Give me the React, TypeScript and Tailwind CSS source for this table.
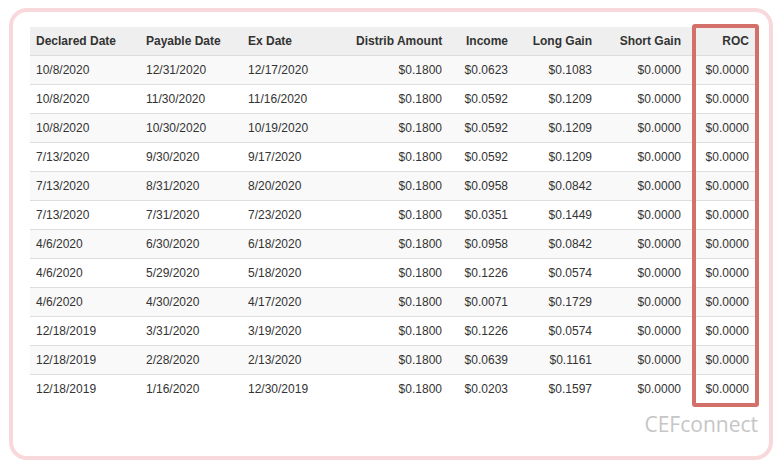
const rows: string[][] = [
  ['10/8/2020', '12/31/2020', '12/17/2020', '$0.1800', '$0.0623', '$0.1083', '$0.0000', '$0.0000'],
  ['10/8/2020', '11/30/2020', '11/16/2020', '$0.1800', '$0.0592', '$0.1209', '$0.0000', '$0.0000'],
  ['10/8/2020', '10/30/2020', '10/19/2020', '$0.1800', '$0.0592', '$0.1209', '$0.0000', '$0.0000'],
  ['7/13/2020', '9/30/2020', '9/17/2020', '$0.1800', '$0.0592', '$0.1209', '$0.0000', '$0.0000'],
  ['7/13/2020', '8/31/2020', '8/20/2020', '$0.1800', '$0.0958', '$0.0842', '$0.0000', '$0.0000'],
  ['7/13/2020', '7/31/2020', '7/23/2020', '$0.1800', '$0.0351', '$0.1449', '$0.0000', '$0.0000'],
  ['4/6/2020', '6/30/2020', '6/18/2020', '$0.1800', '$0.0958', '$0.0842', '$0.0000', '$0.0000'],
  ['4/6/2020', '5/29/2020', '5/18/2020', '$0.1800', '$0.1226', '$0.0574', '$0.0000', '$0.0000'],
  ['4/6/2020', '4/30/2020', '4/17/2020', '$0.1800', '$0.0071', '$0.1729', '$0.0000', '$0.0000'],
  ['12/18/2019', '3/31/2020', '3/19/2020', '$0.1800', '$0.1226', '$0.0574', '$0.0000', '$0.0000'],
  ['12/18/2019', '2/28/2020', '2/13/2020', '$0.1800', '$0.0639', '$0.1161', '$0.0000', '$0.0000'],
  ['12/18/2019', '1/16/2020', '12/30/2019', '$0.1800', '$0.0203', '$0.1597', '$0.0000', '$0.0000'],
];

const headers = ['Declared Date', 'Payable Date', 'Ex Date', 'Distrib Amount', 'Income', 'Long Gain', 'Short Gain', 'ROC'];
const widths = ['w-[110px]', 'w-[102px]', 'w-[108px]', 'w-[98px]', 'w-[66px]', 'w-[84px]', 'w-[89px]', 'w-[68px]'];

export default function App() {
  return (
    <div className="w-[780px] h-[466px] bg-white pt-[8px] pl-[9px] font-['Liberation_Sans',Arial,sans-serif]">
      <div className="w-[764px] h-[452px] border-4 border-[#f9d8db] rounded-[18px] pt-[15px] pl-[17px]">
        <div className="relative w-[725px]">
          <table className="w-[725px] table-fixed border-collapse text-[12px] text-[#333]">
            <colgroup>
              {widths.map((w, i) => (
                <col key={i} className={w} />
              ))}
            </colgroup>
            <thead>
              <tr className="h-[28px] bg-[#efefef]">
                {headers.map((h, i) => (
                  <th
                    key={h}
                    className={`font-bold px-[6px] whitespace-nowrap align-middle ${i < 3 ? 'text-left' : 'text-right'}`}
                  >
                    {h}
                  </th>
                ))}
              </tr>
            </thead>
            <tbody>
              {rows.map((r, ri) => (
                <tr key={ri} className={`h-[29px] border-t border-[#dddddd] ${ri % 2 === 0 ? 'bg-[#f9f9f9]' : 'bg-white'}`}>
                  {r.map((c, ci) => (
                    <td key={ci} className={`px-[6px] whitespace-nowrap align-middle ${ci < 3 ? 'text-left' : 'text-right'}`}>
                      {c}
                    </td>
                  ))}
                </tr>
              ))}
            </tbody>
          </table>
          <div className="absolute left-[662px] top-[-3px] w-[67px] h-[383px] border-[4px] border-[#d4706a] rounded-[3px]" />
        </div>
        <div className="flex justify-end pr-[11px] mt-[9px]">
          <span className="font-['Open_Sans',sans-serif] text-[21px] leading-[24px] text-[#c6c6c6]">CEFconnect</span>
        </div>
      </div>
    </div>
  );
}
